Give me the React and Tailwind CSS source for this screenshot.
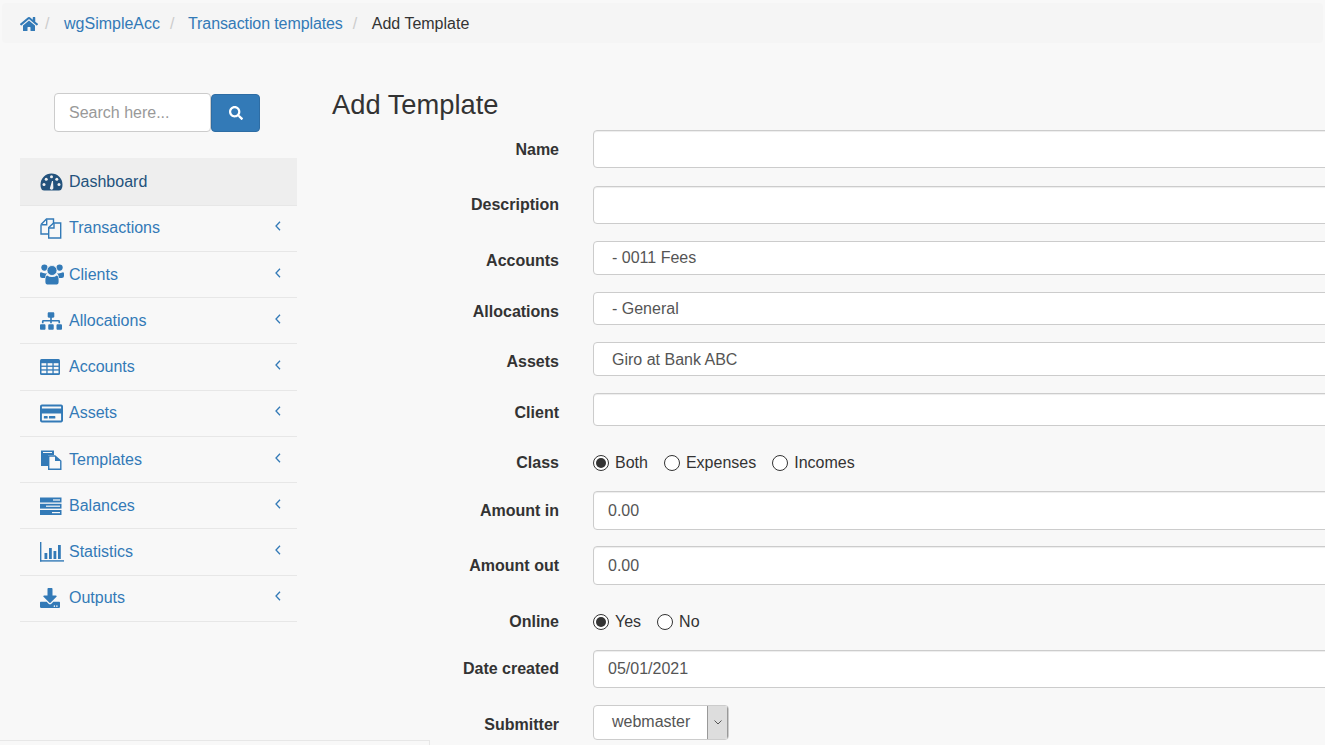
import React from 'react';
import { FaHome, FaSearch, FaSitemap, FaRegCreditCard, FaDownload } from 'react-icons/fa';

function GaugeIcon() {
  return (
    <svg width="23" height="18" viewBox="0 0 23 18">
      <path d="M4 17.5 Q1.6 17.5 1 15 Q0.5 13.5 0.5 11.5 A11 11 0 0 1 22.5 11.5 Q22.5 13.5 22 15 Q21.4 17.5 19 17.5 Z" fill="#23527c" />
      <g fill="#f0f0f0">
        <circle cx="4" cy="11.5" r="1.5" />
        <circle cx="6.2" cy="6.2" r="1.5" />
        <circle cx="11.5" cy="3.8" r="1.5" />
        <circle cx="16.8" cy="6.2" r="1.5" />
        <circle cx="19" cy="11.5" r="1.5" />
        <path d="M9.8 15.5 A1.9 1.9 0 0 0 13.4 15.2 L13 8 L12 8 Z" />
      </g>
    </svg>
  );
}

function FilesIcon() {
  return (
    <svg width="22" height="21" viewBox="0 0 22 21" fill="none" stroke="#337ab7" strokeWidth="1.4">
      <path d="M1 6.5 L6.5 1 H13.5 V6" />
      <path d="M1 6.5 V16 H8.5" />
      <path d="M1.5 6.7 H6.7 V1.5" />
      <path d="M8.7 9.5 L13.7 5 H20.7 V20 H8.7 Z" />
      <path d="M9 10 H14 V5.5" />
    </svg>
  );
}

function UsersIcon() {
  return (
    <svg width="24" height="21" viewBox="0 0 24 21" fill="#337ab7">
      <circle cx="4.4" cy="3.6" r="3.1" />
      <circle cx="19.6" cy="3.6" r="3.1" />
      <path d="M1 8.2 Q0.2 8.2 0 9.5 V12 Q0 14 2.2 14 H5 Q5.5 10.5 7 9.3 Q5 9.7 3.2 9 Z" />
      <path d="M23 8.2 Q23.8 8.2 24 9.5 V12 Q24 14 21.8 14 H19 Q18.5 10.5 17 9.3 Q19 9.7 20.8 9 Z" />
      <circle cx="12" cy="6.5" r="5" stroke="#f8f8f8" strokeWidth="0.8" />
      <path d="M7.2 11.5 Q9 13 12 13 Q15 13 16.8 11.5 Q18.6 12 18.6 16 V18 Q18.6 20.6 15.6 20.6 H8.4 Q5.4 20.6 5.4 18 V16 Q5.4 12 7.2 11.5 Z" />
    </svg>
  );
}

function TableIcon() {
  return (
    <svg width="20" height="16" viewBox="0 0 20 16">
      <rect x="0" y="0" width="20" height="16" rx="1.5" fill="#337ab7" />
      <g fill="#f8f8f8">
        <rect x="1.5" y="4.2" width="4.8" height="2.4" />
        <rect x="7.6" y="4.2" width="4.8" height="2.4" />
        <rect x="13.7" y="4.2" width="4.8" height="2.4" />
        <rect x="1.5" y="7.9" width="4.8" height="2.4" />
        <rect x="7.6" y="7.9" width="4.8" height="2.4" />
        <rect x="13.7" y="7.9" width="4.8" height="2.4" />
        <rect x="1.5" y="11.6" width="4.8" height="2.6" />
        <rect x="7.6" y="11.6" width="4.8" height="2.6" />
        <rect x="13.7" y="11.6" width="4.8" height="2.6" />
      </g>
    </svg>
  );
}

function TemplatesIcon() {
  return (
    <svg width="22" height="20" viewBox="0 0 22 20">
      <path d="M1 0.5 H14 V5 H8 V16 H1 Z" fill="#337ab7" />
      <rect x="3" y="2" width="9" height="1" fill="#f8f8f8" />
      <path d="M8.7 6 H15 L20.8 11 V19.3 H8.7 Z" fill="#f8f8f8" stroke="#337ab7" strokeWidth="1.4" />
      <path d="M15 6 V11 H20.8" fill="#337ab7" />
    </svg>
  );
}

function TasksIcon() {
  return (
    <svg width="22" height="18" viewBox="0 0 22 18">
      <rect x="0" y="0.5" width="21.5" height="5" fill="#337ab7" />
      <rect x="0" y="6.8" width="21.5" height="4.8" fill="#337ab7" />
      <rect x="0" y="13" width="21.5" height="5" fill="#337ab7" />
      <rect x="13" y="2.4" width="7" height="1.2" fill="#f8f8f8" />
      <rect x="6" y="8.6" width="14" height="1.2" fill="#f8f8f8" />
      <rect x="12" y="15" width="8" height="1.2" fill="#f8f8f8" />
    </svg>
  );
}

function BarChartIcon() {
  return (
    <svg width="24" height="20" viewBox="0 0 24 20" fill="#337ab7">
      <rect x="0" y="0" width="1.4" height="19.5" />
      <rect x="0" y="18.2" width="24" height="1.4" />
      <rect x="4.5" y="11" width="2.8" height="6" />
      <rect x="9" y="6" width="2.8" height="11" />
      <rect x="13.5" y="9" width="2.8" height="8" />
      <rect x="18" y="3" width="2.8" height="14" />
    </svg>
  );
}

function AngleIcon() {
  return (
    <svg width="6" height="10" viewBox="0 0 6 10" fill="none" stroke="currentColor" strokeWidth="1.3" className="ml-auto mr-[16px] -translate-y-[2px]">
      <path d="M5 0.8 L1 5 L5 9.2" />
    </svg>
  );
}

const navItems = [
  { label: 'Transactions', icon: <FilesIcon /> },
  { label: 'Clients', icon: <UsersIcon /> },
  { label: 'Allocations', icon: <FaSitemap size={22} /> },
  { label: 'Accounts', icon: <TableIcon /> },
  { label: 'Assets', icon: <FaRegCreditCard size={23} /> },
  { label: 'Templates', icon: <TemplatesIcon /> },
  { label: 'Balances', icon: <TasksIcon /> },
  { label: 'Statistics', icon: <BarChartIcon /> },
  { label: 'Outputs', icon: <FaDownload size={20} /> },
];

function Field({ label, className = '', labelClass = 'pt-[8px]', children }) {
  return (
    <div className={`flex ${className}`}>
      <label className={`w-[227px] shrink-0 text-right font-bold leading-[23px] text-[#333] ${labelClass}`}>{label}</label>
      <div className="ml-[34px] min-w-0 flex-1">{children}</div>
    </div>
  );
}

function TextBox({ value = '', className = 'h-[38px]' }) {
  return (
    <input
      readOnly
      value={value}
      className={`block w-[900px] rounded-[4px] border border-[#ccc] bg-white px-[14px] text-[16px] text-[#555] shadow-[inset_0_1px_1px_rgba(0,0,0,0.075)] ${className}`}
    />
  );
}

function ListBox({ value, className = 'h-[34px] leading-[31px]' }) {
  return (
    <div className={`w-[900px] rounded-[4px] border border-[#ccc] bg-white pl-[18px] text-[#555] ${className}`}>
      {value}
    </div>
  );
}

function Radio({ label, checked, className = '' }) {
  return (
    <span className={`flex items-center ${className}`}>
      <span className="flex h-[16px] w-[16px] items-center justify-center rounded-full border border-[#333] bg-white">
        {checked && <span className="h-[10px] w-[10px] rounded-full bg-[#333]" />}
      </span>
      <span className="ml-[6px] leading-[23px] text-[#333]">{label}</span>
    </span>
  );
}

export default function App() {
  return (
    <div className="relative h-[745px] overflow-hidden bg-[#f8f8f8] text-[16px] text-[#333] [font-family:'Liberation_Sans',Arial,sans-serif]">
      {/* breadcrumb */}
      <div className="mx-[2px] mt-[3px] flex h-[40px] items-center rounded-[4px] bg-[#f5f5f5] pl-[18px] pt-[1px]">
        <FaHome size={18} className="text-[#337ab7]" />
        <span className="ml-[7px] w-[19px] text-[#ccc]">/</span>
        <a className="text-[#337ab7]">wgSimpleAcc</a>
        <span className="ml-[10px] w-[18px] text-[#ccc]">/</span>
        <a className="tracking-[-0.1px] text-[#337ab7]">Transaction templates</a>
        <span className="ml-[10px] w-[19px] text-[#ccc]">/</span>
        <span className="text-[#333]">Add Template</span>
      </div>

      <div className="flex">
        {/* sidebar */}
        <div className="w-[332px] shrink-0 pl-[20px]">
          <div className="mt-[50px] flex items-center pl-[34px]">
            <div className="flex h-[39px] w-[157px] items-center rounded-[4px] border border-[#ccc] bg-white pl-[14px] text-[#999]">
              Search here...
            </div>
            <button className="flex h-[38px] w-[49px] items-center justify-center rounded-[4px] border border-[#2e6da4] bg-[#337ab7] text-white">
              <FaSearch size={14} />
            </button>
          </div>
          <ul className="mt-[26px] w-[277px]">
            <li className="flex h-[47.65px] items-center border-b border-[#e7e7e7] bg-[#eee] pl-[20px] pt-[1px] text-[#23527c]">
              <span className="flex w-[29px] items-center"><GaugeIcon /></span>
              Dashboard
            </li>
            {navItems.map((item) => (
              <li key={item.label} className="flex h-[46.25px] items-center border-b border-[#e7e7e7] pl-[20px] text-[#337ab7]">
                <span className="flex w-[29px] items-center">{item.icon}</span>
                {item.label}
                <AngleIcon />
              </li>
            ))}
          </ul>
        </div>

        {/* form */}
        <div className="min-w-0 flex-1">
          <h3 className="mt-[44px] text-[27.3px] leading-[35px] text-[#333]">Add Template</h3>
          <div className="mt-[8px]">
            <Field label="Name"><TextBox /></Field>
            <Field label="Description" className="mt-[18px]" labelClass="pt-[7px]"><TextBox /></Field>
            <Field label="Accounts" className="mt-[17px]"><ListBox value="- 0011 Fees" /></Field>
            <Field label="Allocations" className="mt-[17px]"><ListBox value="- General" className="h-[33px] leading-[31px]" /></Field>
            <Field label="Assets" className="mt-[17px]"><ListBox value="Giro at Bank ABC" className="h-[34px] leading-[33px]" /></Field>
            <Field label="Client" className="mt-[17px]"><TextBox className="h-[33px]" /></Field>
            <Field label="Class" className="mt-[25px]" labelClass="">
              <div className="flex h-[23px] items-center">
                <Radio label="Both" checked />
                <Radio label="Expenses" className="ml-[16px]" />
                <Radio label="Incomes" className="ml-[16px]" />
              </div>
            </Field>
            <Field label="Amount in" className="mt-[17px]"><TextBox value="0.00" className="h-[39px]" /></Field>
            <Field label="Amount out" className="mt-[16px]"><TextBox value="0.00" className="h-[39px]" /></Field>
            <Field label="Online" className="mt-[25px]" labelClass="">
              <div className="flex h-[23px] items-center">
                <Radio label="Yes" checked />
                <Radio label="No" className="ml-[16px]" />
              </div>
            </Field>
            <Field label="Date created" className="mt-[17px]" labelClass="pt-[7px]"><TextBox value="05/01/2021" /></Field>
            <Field label="Submitter" className="mt-[17px]">
              <div className="flex h-[35px] w-[136px] items-stretch overflow-hidden rounded-[4px] border border-[#ccc] bg-white">
                <span className="flex-1 pl-[18px] leading-[31px] text-[#555]">webmaster</span>
                <span className="flex w-[21px] items-center justify-center border-x border-[#999] bg-[#ddd]">
                  <svg width="8" height="5" viewBox="0 0 8 5" fill="none" stroke="#555"><path d="M0.5 0.5 L4 4 L7.5 0.5" /></svg>
                </span>
              </div>
            </Field>
          </div>
        </div>
      </div>

      {/* leftover panel edge peeking in at the bottom */}
      <div className="absolute bottom-0 left-0 h-[5px] w-[430px] border-r border-t border-[#e7e7e7]" />
    </div>
  );
}
